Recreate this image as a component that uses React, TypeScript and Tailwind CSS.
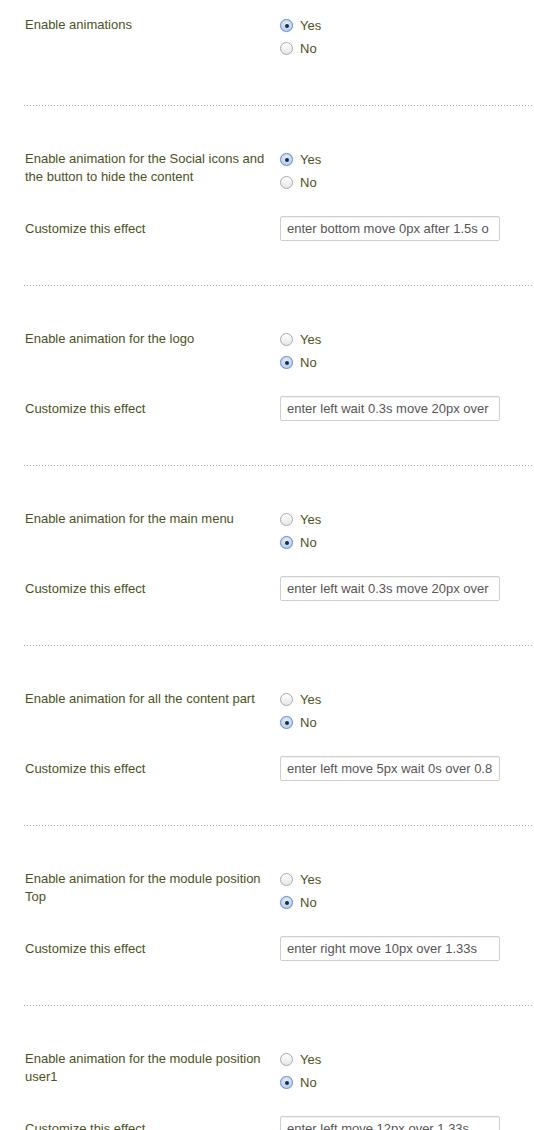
import React from "react";

type Sec = { label: string; yes: boolean; effect?: string };

const sections: Sec[] = [
  { label: "Enable animations", yes: true },
  {
    label: "Enable animation for the Social icons and the button to hide the content",
    yes: true,
    effect: "enter bottom move 0px after 1.5s o",
  },
  { label: "Enable animation for the logo", yes: false, effect: "enter left wait 0.3s move 20px over" },
  { label: "Enable animation for the main menu", yes: false, effect: "enter left wait 0.3s move 20px over" },
  { label: "Enable animation for all the content part", yes: false, effect: "enter left move 5px wait 0s over 0.8" },
  { label: "Enable animation for the module position Top", yes: false, effect: "enter right move 10px over 1.33s" },
  { label: "Enable animation for the module position user1", yes: false, effect: "enter left move 12px over 1.33s" },
];

function Radio({ checked, text }: { checked: boolean; text: string }) {
  return (
    <div className="flex h-[23px] items-center">
      {checked ? (
        <span className="flex h-[13px] w-[13px] items-center justify-center rounded-full border border-[#6d8fc0] bg-[radial-gradient(circle_at_50%_35%,#e4eefb,#a9c4ea)] shadow-[0_0_1px_rgba(60,100,170,0.5)]">
          <span className="h-[4px] w-[4px] rounded-full bg-[#1d2a3c]" />
        </span>
      ) : (
        <span className="h-[13px] w-[13px] rounded-full border border-[#a9a9a9] bg-[linear-gradient(#ffffff,#e6e6e6)]" />
      )}
      <span className="ml-[7px] text-[13px] leading-[18px] text-[#4a5222]">{text}</span>
    </div>
  );
}

function Divider() {
  return (
    <div className="h-px w-full bg-[linear-gradient(to_right,#b4b4b4_50%,transparent_50%)] bg-[length:3px_1px] bg-repeat-x" />
  );
}

export default function App() {
  return (
    <div
      className="h-[1130px] w-[534px] overflow-hidden bg-white pl-[24px]"
      style={{ fontFamily: '"Liberation Sans", Arial, Helvetica, sans-serif' }}
    >
      {sections.map((s, i) => (
        <div key={i}>
          <div className={i === 0 ? "pt-[14px] pb-[45px]" : "pt-[42px] pb-[44px]"}>
            <div className="flex">
              <div className="w-[256px] pr-[8px] pl-px pt-[2px] text-[13px] leading-[18px] text-[#4a5222]">
                {s.label}
              </div>
              <div>
                <Radio checked={s.yes} text="Yes" />
                <Radio checked={!s.yes} text="No" />
              </div>
            </div>
            {s.effect && (
              <div className="mt-[22px] flex items-center">
                <div className="w-[256px] pl-px text-[13px] leading-[18px] text-[#4a5222]">Customize this effect</div>
                <div className="h-[25px] w-[220px] overflow-hidden whitespace-nowrap rounded-[2px] border border-[#cfcfcf] bg-white px-[6px] text-[13px] leading-[23px] text-[#555555] shadow-[inset_0_1px_1px_rgba(0,0,0,0.06)]">
                  {s.effect}
                </div>
              </div>
            )}
          </div>
          {i < sections.length - 1 && <Divider />}
        </div>
      ))}
    </div>
  );
}
